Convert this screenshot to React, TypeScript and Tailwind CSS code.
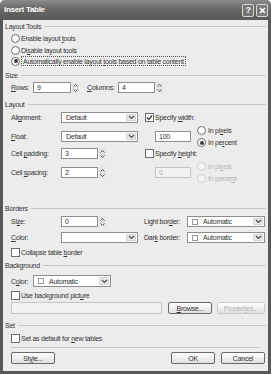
import React from "react";

type Kids = { children?: React.ReactNode };

function Chevron({ dim }: { dim?: boolean }) {
  return (
    <svg width="7" height="5" viewBox="0 0 7 5">
      <polyline points="1,1 3.5,3.5 6,1" fill="none" stroke={dim ? "#b5b5b5" : "#4a4a4a"} strokeWidth="1.2" />
    </svg>
  );
}

function Spin() {
  return (
    <div className="ml-px flex h-full w-[7px] shrink-0 flex-col items-center justify-center gap-[2px] bg-[#e4e4e4]">
      <svg width="5" height="3" viewBox="0 0 5 3">
        <polyline points="0.5,2.5 2.5,0.5 4.5,2.5" fill="none" stroke="#555" strokeWidth="1" />
      </svg>
      <svg width="5" height="3" viewBox="0 0 5 3">
        <polyline points="0.5,0.5 2.5,2.5 4.5,0.5" fill="none" stroke="#555" strokeWidth="1" />
      </svg>
    </div>
  );
}

function Input({ w, value, dim }: { w: string; value?: string; dim?: boolean }) {
  return (
    <div
      className={`flex h-full shrink-0 items-center border pl-[3px] ${w} ${
        dim ? "border-[#c4c4c4] bg-[#f2f2f2] text-[#b0b0b0]" : "border-[#8e8e8e] bg-white"
      }`}
    >
      {value}
    </div>
  );
}

function Select({ w, children }: { w: string } & Kids) {
  return (
    <div className={`flex h-full shrink-0 items-stretch border border-[#8e8e8e] bg-white ${w}`}>
      <div className="flex flex-1 items-center pl-[4px]">{children}</div>
      <div className="m-px flex w-[10px] items-center justify-center rounded-[1px] border border-[#d2d2d2] bg-[#e9e9e9]">
        <Chevron />
      </div>
    </div>
  );
}

function Swatch() {
  return (
    <span className="flex items-center gap-[5px]">
      <span className="h-[6px] w-[6px] border border-[#9a9a9a] bg-white" />
      <span>Automatic</span>
    </span>
  );
}

function Radio({ on, dim }: { on?: boolean; dim?: boolean }) {
  return (
    <span
      className={`flex h-[9px] w-[9px] shrink-0 items-center justify-center rounded-full border ${
        dim ? "border-[#d0d0d0] bg-[#f3f3f3]" : "border-[#6c6c6c] bg-white"
      }`}
    >
      {on && <span className="h-[4px] w-[4px] rounded-full bg-[#3c3c3c]" />}
    </span>
  );
}

function Check({ on }: { on?: boolean }) {
  return (
    <span className="flex h-[9px] w-[9px] shrink-0 items-center justify-center border border-[#6c6c6c] bg-white">
      {on && (
        <svg width="7" height="7" viewBox="0 0 7 7">
          <polyline points="1,3.5 2.8,5.3 6,1.5" fill="none" stroke="#333" strokeWidth="1.2" />
        </svg>
      )}
    </span>
  );
}

function Header({ title }: { title: string }) {
  return (
    <div className="flex h-[10px] items-center pl-[2px] pr-[2px]">
      <span>{title}</span>
      <span className="ml-[3px] h-px flex-1 bg-[#c6c6c6]" />
    </div>
  );
}

function Button({ w, dim, children }: { w: string; dim?: boolean } & Kids) {
  return (
    <div
      className={`flex h-full shrink-0 items-center justify-center rounded-[2px] border bg-linear-to-b from-white to-[#e0e0e0] ${w} ${
        dim ? "border-[#c8c8c8] text-[#b4b4b4]" : "border-[#6a6a6a]"
      }`}
    >
      <span>{children}</span>
    </div>
  );
}

export default function App() {
  return (
    <div className="h-[374px] w-[271px] bg-white font-['Liberation_Sans',Arial,sans-serif] text-[7px] leading-none tracking-[-0.25px] text-[#333]">
      <div className="flex h-full flex-col rounded-t-[5px] bg-[#585858] px-[3px] pb-[3px]">
        {/* Title bar */}
        <div className="-mx-[3px] flex h-[20px] shrink-0 items-center rounded-t-[5px] bg-linear-to-b from-[#8c8c8c] via-[#646464] to-[#5a5a5a] pl-[4px] pr-[3px]">
          <span className="text-[8px] font-bold tracking-[-0.3px] text-white">Insert Table</span>
          <div className="ml-auto flex gap-[2px]">
            <div className="flex h-[13px] w-[12px] items-center justify-center rounded-[2px] border border-[#d8d8d8] bg-[#737373] text-[9px] font-bold text-white">
              ?
            </div>
            <div className="flex h-[13px] w-[12px] items-center justify-center rounded-[2px] border border-[#d8d8d8] bg-[#7a7a7a]">
              <svg width="7" height="7" viewBox="0 0 7 7">
                <path d="M1 1 L6 6 M6 1 L1 6" stroke="white" strokeWidth="1.6" />
              </svg>
            </div>
          </div>
        </div>

        {/* Body */}
        <div className="flex flex-1 flex-col bg-[#ececec]">
          <div className="mt-px">
            <Header title="Layout Tools" />
          </div>
          <div className="mt-[2px] flex h-[10px] items-center pl-[8px]">
            <Radio />
            <span className="ml-px">
              Enable layout <u>t</u>ools
            </span>
          </div>
          <div className="mt-[2px] flex h-[10px] items-center pl-[8px]">
            <Radio />
            <span className="ml-px">
              Di<u>s</u>able layout tools
            </span>
          </div>
          <div className="mt-px flex h-[10px] items-center pl-[8px]">
            <Radio on />
            <span className="ml-px flex h-full items-center border border-dotted border-[#555] px-px">
              <span>
                Automatically enable layout <u>t</u>ools based on table content
              </span>
            </span>
          </div>

          <div className="mt-[4px]">
            <Header title="Size" />
          </div>
          <div className="mt-[2px] flex h-[11px] items-center pl-[8px]">
            <span className="w-[22px] shrink-0">
              <u>R</u>ows:
            </span>
            <Input w="w-[38px]" value="9" />
            <Spin />
            <span className="ml-[8px] w-[31px] shrink-0">
              <u>C</u>olumns:
            </span>
            <Input w="w-[37px]" value="4" />
            <Spin />
          </div>

          <div className="mt-[6px]">
            <Header title="Layout" />
          </div>
          <div className="mt-[3px] flex h-[11px] items-center pl-[8px]">
            <span className="w-[50px] shrink-0">
              Ali<u>g</u>nment:
            </span>
            <Select w="w-[77px]">Default</Select>
            <span className="ml-[7px]">
              <Check on />
            </span>
            <span className="ml-px">
              Specify <u>w</u>idth:
            </span>
          </div>
          <div className="mt-[8px] flex h-[11px] items-center pl-[8px]">
            <span className="w-[50px] shrink-0">
              <u>F</u>loat:
            </span>
            <Select w="w-[77px]">Default</Select>
            <span className="ml-[17px] h-full">
              <Input w="w-[36px]" value="100" />
            </span>
            <div className="ml-[6px] flex h-full flex-col justify-center">
              <div className="flex h-[12px] shrink-0 items-center">
                <Radio />
                <span className="ml-[2px]">
                  In pi<u>x</u>els
                </span>
              </div>
              <div className="flex h-[12px] shrink-0 items-center">
                <Radio on />
                <span className="ml-[2px]">
                  In pe<u>r</u>cent
                </span>
              </div>
            </div>
          </div>
          <div className="mt-[6px] flex h-[11px] items-center pl-[8px]">
            <span className="w-[50px] shrink-0">
              Cell <u>p</u>adding:
            </span>
            <Input w="w-[37px]" value="3" />
            <Spin />
            <span className="ml-[39px]">
              <Check />
            </span>
            <span className="ml-px">
              Specify <u>h</u>eight:
            </span>
          </div>
          <div className="mt-[8px] flex h-[11px] items-center pl-[8px]">
            <span className="w-[50px] shrink-0">
              Cell <u>s</u>pacing:
            </span>
            <Input w="w-[37px]" value="2" />
            <Spin />
            <span className="ml-[49px] h-full">
              <Input w="w-[36px]" value="0" dim />
            </span>
            <div className="ml-[6px] flex h-full flex-col justify-center text-[#b4b4b4]">
              <div className="flex h-[12px] shrink-0 items-center">
                <Radio dim />
                <span className="ml-[2px]">
                  In pi<u>x</u>els
                </span>
              </div>
              <div className="flex h-[12px] shrink-0 items-center">
                <Radio dim />
                <span className="ml-[2px]">
                  In perce<u>n</u>t
                </span>
              </div>
            </div>
          </div>

          <div className="mt-[25px]">
            <Header title="Borders" />
          </div>
          <div className="mt-[3px] flex h-[11px] items-center pl-[8px]">
            <span className="w-[50px] shrink-0">
              Si<u>z</u>e:
            </span>
            <Input w="w-[37px]" value="0" />
            <Spin />
            <span className="ml-[38px] w-[43px] shrink-0">
              Light bor<u>d</u>er:
            </span>
            <Select w="w-[78px]">
              <Swatch />
            </Select>
          </div>
          <div className="mt-[5px] flex h-[11px] items-center pl-[8px]">
            <span className="w-[50px] shrink-0">
              <u>C</u>olor:
            </span>
            <Select w="w-[77px]" />
            <span className="ml-[6px] w-[43px] shrink-0">
              Dar<u>k</u> border:
            </span>
            <Select w="w-[78px]">
              <Swatch />
            </Select>
          </div>
          <div className="mt-[4px] flex h-[10px] items-center pl-[8px]">
            <Check />
            <span className="ml-px">
              Collapse table <u>b</u>order
            </span>
          </div>

          <div className="mt-[3px]">
            <Header title="Background" />
          </div>
          <div className="mt-[5px] flex h-[12px] items-center pl-[8px]">
            <span className="w-[22px] shrink-0">
              C<u>o</u>lor:
            </span>
            <Select w="w-[78px]">
              <Swatch />
            </Select>
          </div>
          <div className="mt-[3px] flex h-[10px] items-center pl-[8px]">
            <Check />
            <span className="ml-px">
              Use background pict<u>u</u>re
            </span>
          </div>
          <div className="mt-[2px] flex h-[12px] items-center pl-[8px]">
            <Input w="w-[151px]" dim />
            <span className="ml-[6px] h-full">
              <Button w="w-[44px]">
                <u>B</u>rowse...
              </Button>
            </span>
            <span className="ml-[5px] h-full">
              <Button w="w-[48px]" dim>
                Propert<u>i</u>es...
              </Button>
            </span>
          </div>

          <div className="mt-[6px]">
            <Header title="Set" />
          </div>
          <div className="mt-[3px] flex h-[10px] items-center pl-[8px]">
            <Check />
            <span className="ml-px">
              Set as default for <u>n</u>ew tables
            </span>
          </div>
          <div className="mx-[8px] mt-[4px] h-px bg-[#c6c6c6]" />
          <div className="mt-[4px] flex h-[12px] items-center pl-[8px] pr-[3px]">
            <Button w="w-[44px]">
              St<u>y</u>le...
            </Button>
            <span className="ml-auto h-full">
              <Button w="w-[44px]">OK</Button>
            </span>
            <span className="ml-[6px] h-full">
              <Button w="w-[44px]">Cancel</Button>
            </span>
          </div>
        </div>
      </div>
    </div>
  );
}
